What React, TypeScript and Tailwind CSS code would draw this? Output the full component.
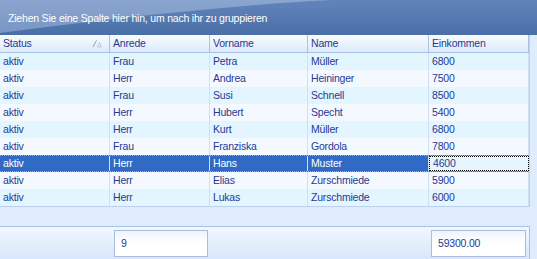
const rows = [
  ["aktiv", "Frau", "Petra", "Müller", "6800"],
  ["aktiv", "Herr", "Andrea", "Heininger", "7500"],
  ["aktiv", "Frau", "Susi", "Schnell", "8500"],
  ["aktiv", "Herr", "Hubert", "Specht", "5400"],
  ["aktiv", "Herr", "Kurt", "Müller", "6800"],
  ["aktiv", "Frau", "Franziska", "Gordola", "7800"],
  ["aktiv", "Herr", "Hans", "Muster", "4600"],
  ["aktiv", "Herr", "Elias", "Zurschmiede", "5900"],
  ["aktiv", "Herr", "Lukas", "Zurschmiede", "6000"],
];

const columns = [
  { title: "Status", w: "w-[110px]" },
  { title: "Anrede", w: "w-[100px]" },
  { title: "Vorname", w: "w-[98px]" },
  { title: "Name", w: "w-[121px]" },
  { title: "Einkommen", w: "w-[100px]" },
];

const SELECTED = 6;

export default function App() {
  return (
    <div className="w-[537px] h-[259px] overflow-hidden flex flex-col bg-[#dfecfc] text-[10.5px] tracking-[-0.2px] text-[#1f3a93] font-['Liberation_Sans',Arial,sans-serif] leading-none">
      {/* group panel */}
      <div className="relative h-[35px] shrink-0 bg-gradient-to-b from-[#6185bb] to-[#4a6fa7] flex items-center px-[8px]">
        <svg className="absolute inset-0" width="537" height="35" viewBox="0 0 537 35" preserveAspectRatio="none">
          <defs>
            <linearGradient id="g" x1="0" y1="0" x2="0" y2="1">
              <stop offset="0" stopColor="#8aa6cf" />
              <stop offset="1" stopColor="#7896c4" />
            </linearGradient>
          </defs>
          <path d="M0 0 H330 C250 4 130 16 0 33 Z" fill="url(#g)" />
        </svg>
        <span className="relative text-white mt-[2px]">Ziehen Sie eine Spalte hier hin, um nach ihr zu gruppieren</span>
      </div>

      {/* grid */}
      <div className="w-[530px] flex flex-col border-r border-b border-[#bcd1ee]">
        <div className="flex h-[18px] bg-gradient-to-b from-[#f9fcff] to-[#dde9f9] border-b border-[#a9c1e5]">
          {columns.map((c, i) => (
            <div
              key={c.title}
              className={`${c.w} shrink-0 flex items-center px-[3px] border-r border-[#a9c1e5] ${i === 0 ? "justify-between" : ""}`}
            >
              <span>{c.title}</span>
              {i === 0 && (
                <svg width="10" height="9" viewBox="0 0 10 9" className="mr-[4px]">
                  <path d="M1 8 L4.5 1.5" stroke="#8ea0bd" strokeWidth="1" fill="none" />
                  <path d="M5.5 8 L7.5 3.5 L9.5 8 Z" stroke="#b9c6da" strokeWidth="1" fill="none" />
                </svg>
              )}
            </div>
          ))}
        </div>
        {rows.map((r, ri) => {
          const sel = ri === SELECTED;
          return (
            <div
              key={ri}
              className={`flex h-[17px] ${
                sel
                  ? "bg-[#316ac5] text-white border-y border-dotted border-[#e4a550]"
                  : ri % 2 === 0
                  ? "bg-[#e3f5fe]"
                  : "bg-[#f4f9ff]"
              }`}
            >
              {r.map((v, ci) => {
                const focus = sel && ci === 4;
                return (
                  <div
                    key={ci}
                    className={`${columns[ci].w} shrink-0 flex items-center px-[3px] ${
                      focus
                        ? "bg-[#e6f6fe] text-[#1f3a93] border border-dotted border-black"
                        : "border-r border-[#cfe0f3]"
                    } ${sel && !focus ? "border-[#5b86cf]" : ""}`}
                  >
                    {v}
                  </div>
                );
              })}
            </div>
          );
        })}
      </div>

      <div className="h-[19px] shrink-0" />

      {/* footer */}
      <div className="flex-1 w-[530px] border-t border-r border-[#a9c1e5] bg-gradient-to-b from-[#f1f7fe] to-[#d8e7fb] flex items-center">
        <div className="w-[114px] shrink-0" />
        <div className="w-[94px] h-[27px] shrink-0 border border-[#a8bde0] bg-gradient-to-b from-[#eef4fc] via-white to-white flex items-center px-[6px]">9</div>
        <div className="flex-1" />
        <div className="w-[95px] h-[27px] shrink-0 mr-[3px] border border-[#a8bde0] bg-gradient-to-b from-[#eef4fc] via-white to-white flex items-center px-[6px]">59300.00</div>
      </div>
    </div>
  );
}
